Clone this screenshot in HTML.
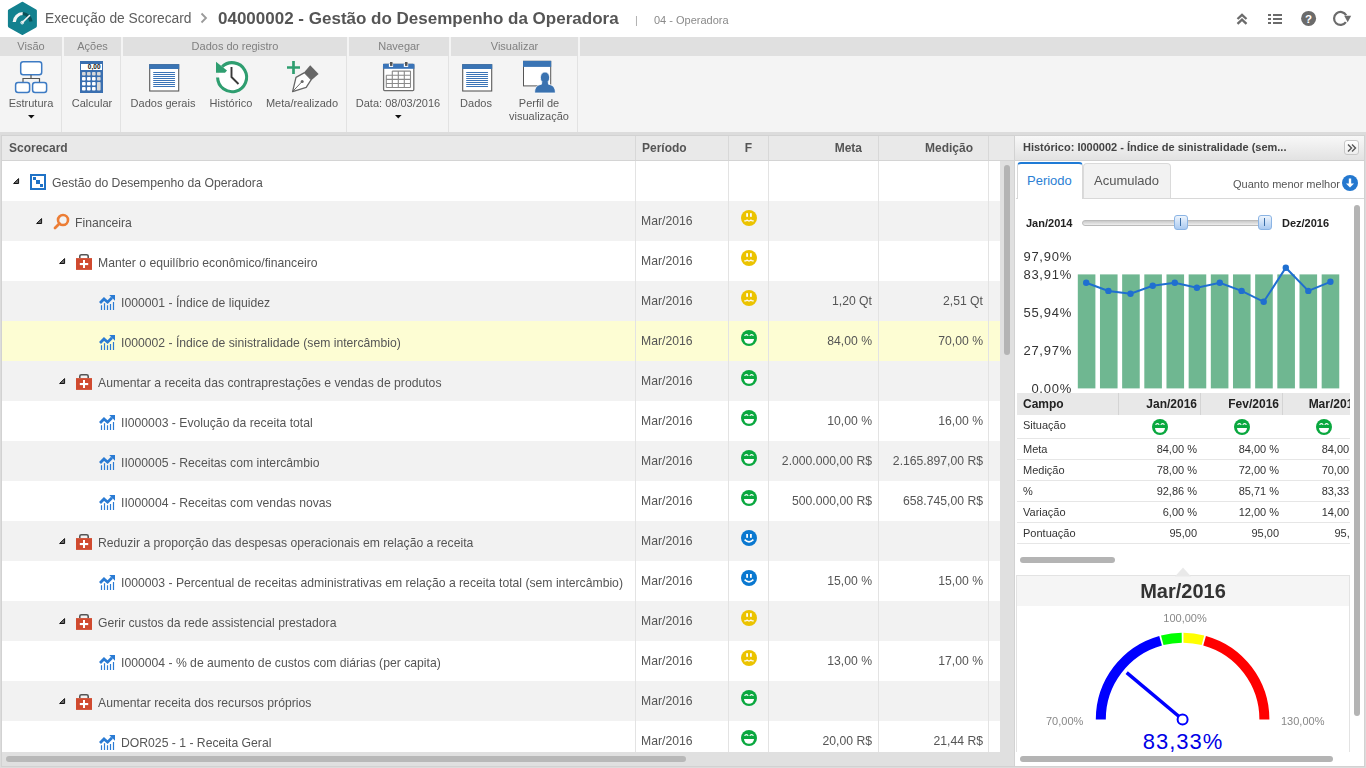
<!DOCTYPE html><html><head><meta charset="utf-8"><style>
*{box-sizing:border-box;margin:0;padding:0}
html,body{width:1366px;height:768px;overflow:hidden;background:#fff;font-family:"Liberation Sans", sans-serif;}
.a{position:absolute}
.t{position:absolute;white-space:nowrap;filter:grayscale(1)}
.c{filter:none}
</style></head><body><svg class="a" style="left:6px;top:0px" width="34" height="37" viewBox="0 0 34 37">
<polygon points="16.4,3.3 29.4,10.7 29.4,26.1 16.4,33.5 3.4,26.1 3.4,10.7" fill="#13818f" stroke="#13818f" stroke-width="3" stroke-linejoin="round"/>
<path d="M8.2,22 A9,9 0 0 1 16.8,13.5" fill="none" stroke="#f4f4f4" stroke-width="3.2"/>
<path d="M16.8,13.5 A9,9 0 0 1 25,21.5" fill="none" stroke="#0b5058" stroke-width="3.2"/>
<path d="M16.2,22.6 L23.5,15.5" stroke="#f4f4f4" stroke-width="1.6" stroke-linecap="round"/>
<circle cx="16.2" cy="22.6" r="1.4" fill="none" stroke="#f4f4f4" stroke-width="1"/>
</svg>
<div class="t" style="left:45px;top:10px;font-size:13.8px;color:#5e5e5e;line-height:18px">Execução de Scorecard</div>
<svg class="a" style="left:199px;top:12px" width="10" height="12"><path d="M2.5,1.5 L7,6 L2.5,10.5" fill="none" stroke="#9a9a9a" stroke-width="1.8"/></svg>
<div class="t" style="left:218px;top:9px;font-size:17px;font-weight:bold;color:#555;line-height:20px">04000002 - Gestão do Desempenho da Operadora</div>
<div class="t" style="left:635px;top:13px;font-size:11px;color:#aaa;line-height:14px">|</div>
<div class="t" style="left:654px;top:13px;font-size:11px;color:#8a8a8a;line-height:14px">04 - Operadora</div>
<svg class="a" style="left:1232px;top:8px" width="124" height="22" viewBox="0 0 124 22">
<g fill="none" stroke="#6b6b6b" stroke-width="2.3"><path d="M5.5,11 L10,6.8 L14.5,11"/><path d="M5.5,15.8 L10,11.6 L14.5,15.8"/></g>
<g fill="#6b6b6b"><rect x="36" y="6" width="3" height="2"/><rect x="36" y="10" width="3" height="2"/><rect x="36" y="14" width="3" height="2"/>
<rect x="41" y="6" width="9" height="2"/><rect x="41" y="10" width="9" height="2"/><rect x="41" y="14" width="9" height="2"/></g>
<circle cx="76.6" cy="10.4" r="7.5" fill="#6b6b6b"/>
<text x="76.6" y="14.6" text-anchor="middle" font-family="Liberation Sans" font-weight="bold" font-size="11.5" fill="#fff">?</text>
<path d="M114.2,7.2 A6.5,6.5 0 1 0 113.9,14.2" fill="none" stroke="#6b6b6b" stroke-width="2.2"/>
<path d="M112.2,7.8 L119.2,7.8 L115.7,14.2 Z" fill="#6b6b6b"/>
</svg>
<div class="a" style="left:0;top:37px;width:1366px;height:95px;background:#f4f4f4"></div>
<div class="t" style="left:0px;top:37px;width:62px;height:19px;background:#e0e0e0;color:#808080;font-size:11px;line-height:19px;text-align:center">Visão</div>
<div class="t" style="left:64px;top:37px;width:57px;height:19px;background:#e0e0e0;color:#808080;font-size:11px;line-height:19px;text-align:center">Ações</div>
<div class="t" style="left:123px;top:37px;width:224px;height:19px;background:#e0e0e0;color:#808080;font-size:11px;line-height:19px;text-align:center">Dados do registro</div>
<div class="t" style="left:349px;top:37px;width:100px;height:19px;background:#e0e0e0;color:#808080;font-size:11px;line-height:19px;text-align:center">Navegar</div>
<div class="t" style="left:451px;top:37px;width:127px;height:19px;background:#e0e0e0;color:#808080;font-size:11px;line-height:19px;text-align:center">Visualizar</div>
<div class="t" style="left:580px;top:37px;width:786px;height:19px;background:#e0e0e0;color:#808080;font-size:11px;line-height:19px;text-align:center"></div>
<div class="a" style="left:61px;top:56px;width:1px;height:76px;background:#e2e2e2"></div>
<div class="a" style="left:120px;top:56px;width:1px;height:76px;background:#e2e2e2"></div>
<div class="a" style="left:346px;top:56px;width:1px;height:76px;background:#e2e2e2"></div>
<div class="a" style="left:448px;top:56px;width:1px;height:76px;background:#e2e2e2"></div>
<div class="a" style="left:577px;top:56px;width:1px;height:76px;background:#e2e2e2"></div>
<svg class="a" style="left:13px;top:60px" width="36" height="34" viewBox="0 0 36 34">
<rect x="7.7" y="1.7" width="21" height="13" rx="2.5" fill="#fff" stroke="#3d7bc4" stroke-width="1.5"/>
<path d="M18,15 V18.5 M10,22 V18.5 H26.5 V22" fill="none" stroke="#555" stroke-width="1.2"/>
<rect x="2.6" y="22.5" width="14" height="10" rx="2.5" fill="#fff" stroke="#3d7bc4" stroke-width="1.5"/>
<rect x="19.6" y="22.5" width="14" height="10" rx="2.5" fill="#fff" stroke="#3d7bc4" stroke-width="1.5"/>
</svg>
<div class="t" style="left:-29px;top:97px;width:120px;text-align:center;font-size:11px;line-height:13px;color:#5a5a5a">Estrutura</div>
<svg class="a" style="left:27.5px;top:115px" width="8" height="5"><path d="M0,0 H6.6 L3.3,3.4 Z" fill="#111"/></svg>
<svg class="a" style="left:80px;top:61px" width="23" height="32" viewBox="0 0 23 32"><rect x="0" y="0" width="23" height="32" fill="#3a6fb0"/><rect x="1" y="3" width="21" height="6" fill="#fff"/><text x="20.5" y="8.3" text-anchor="end" font-family="Liberation Sans" font-weight="bold" font-size="6.5" fill="#111">0,00</text><rect x="2" y="11" width="3.6" height="3.6" rx="0.8" fill="#d8d8d8"/><rect x="7" y="11" width="3.6" height="3.6" rx="0.8" fill="#d8d8d8"/><rect x="12" y="11" width="3.6" height="3.6" rx="0.8" fill="#d8d8d8"/><rect x="17" y="11" width="3.6" height="3.6" rx="0.8" fill="#d8d8d8"/><rect x="2" y="16" width="3.6" height="3.6" rx="0.8" fill="#fff"/><rect x="7" y="16" width="3.6" height="3.6" rx="0.8" fill="#fff"/><rect x="12" y="16" width="3.6" height="3.6" rx="0.8" fill="#fff"/><rect x="17" y="16" width="3.6" height="3.6" rx="0.8" fill="#d8d8d8"/><rect x="2" y="21" width="3.6" height="3.6" rx="0.8" fill="#fff"/><rect x="7" y="21" width="3.6" height="3.6" rx="0.8" fill="#fff"/><rect x="12" y="21" width="3.6" height="3.6" rx="0.8" fill="#fff"/><rect x="2" y="26" width="3.6" height="3.6" rx="0.8" fill="#fff"/><rect x="7" y="26" width="3.6" height="3.6" rx="0.8" fill="#fff"/><rect x="12" y="26" width="3.6" height="3.6" rx="0.8" fill="#fff"/><rect x="17" y="21" width="3.6" height="8.6" rx="0.8" fill="#d8d8d8"/></svg>
<div class="t" style="left:32px;top:97px;width:120px;text-align:center;font-size:11px;line-height:13px;color:#5a5a5a">Calcular</div>
<svg class="a" style="left:148px;top:63px" width="32" height="29" viewBox="0 0 32 29">
<rect x="1.7" y="1.7" width="29" height="26.3" fill="#fff" stroke="#5a5a5a" stroke-width="1.1"/>
<rect x="1.2" y="1.2" width="30" height="4.8" fill="#3a74b4"/>
<g stroke="#3a74b8" stroke-width="1.05" stroke-linecap="round"><path d="M5.6,9.5H26.6M5.6,11.5H26.6M5.6,13.5H26.6M5.6,15.5H26.6M5.6,17.5H26.6M5.6,19.5H26.6M5.6,21.5H26.6M5.6,23.5H26.6"/></g>
</svg>
<div class="t" style="left:103px;top:97px;width:120px;text-align:center;font-size:11px;line-height:13px;color:#5a5a5a">Dados gerais</div>
<svg class="a" style="left:214px;top:59px" width="36" height="36" viewBox="0 0 36 36">
<circle cx="18" cy="17.9" r="13.5" fill="#fff"/>
<path d="M3.6,18.5 A14.5,14.5 0 1 0 8.2,7.6" fill="none" stroke="#2f9e70" stroke-width="3.1"/>
<path d="M2,2.8 L2,13.8 L11,13.8 L13,11.4 Z" fill="#2f9e70"/>
<path d="M17.5,8 V18 L24.5,25" fill="none" stroke="#3a3a3a" stroke-width="1.9"/>
</svg>
<div class="t" style="left:171px;top:97px;width:120px;text-align:center;font-size:11px;line-height:13px;color:#5a5a5a">Histórico</div>
<svg class="a" style="left:285px;top:59px" width="36" height="36" viewBox="0 0 36 36">
<path d="M8.5,2 V15 M2,8.5 H15" stroke="#2f9e70" stroke-width="2.7"/>
<path d="M25.2,6.2 L33.6,15 L26.4,21.3 L19.2,13.2 Z" fill="#666"/>
<path d="M19.5,13.6 L11,18.4 L7.6,32.6 L21.2,28.4 L26.2,20.6 Z" fill="#fff" stroke="#666" stroke-width="1.3" stroke-linejoin="round"/>
<path d="M7.6,32.6 L16.8,22.8" stroke="#666" stroke-width="1"/>
<circle cx="17.2" cy="22.6" r="1.5" fill="#666"/>
</svg>
<div class="t" style="left:242px;top:97px;width:120px;text-align:center;font-size:11px;line-height:13px;color:#5a5a5a">Meta/realizado</div>
<svg class="a" style="left:382px;top:61px" width="33" height="31" viewBox="0 0 33 31">
<rect x="1.6" y="3.4" width="30.2" height="26.2" rx="1" fill="#fff" stroke="#6e6e6e" stroke-width="1.3"/>
<rect x="1" y="2.8" width="31.4" height="5" fill="#3a74b8"/>
<rect x="6.9" y="2.8" width="4.2" height="3.1" fill="#fff"/><rect x="21.8" y="2.8" width="4.4" height="3.1" fill="#fff"/>
<rect x="8" y="1" width="2.5" height="3.9" fill="#555"/><rect x="23" y="1" width="2.5" height="3.9" fill="#555"/>
<g stroke="#8a8a8a" stroke-width="1.1" fill="none">
<path d="M10.3,10.1 H28.5 M4.3,14.3 H28.5 M4.3,18.4 H28.5 M4.3,22.5 H28.5 M4.3,26.5 H28.5 M4.3,14.3 V26.5 M10.3,10.1 V26.5 M16.3,10.1 V26.5 M22.3,10.1 V26.5 M28.5,10.1 V26.5"/></g>
</svg>
<div class="t" style="left:338px;top:97px;width:120px;text-align:center;font-size:11px;line-height:13px;color:#5a5a5a">Data: 08/03/2016</div>
<svg class="a" style="left:395px;top:115px" width="8" height="5"><path d="M0,0 H6.6 L3.3,3.4 Z" fill="#111"/></svg>
<svg class="a" style="left:461px;top:63px" width="32" height="29" viewBox="0 0 32 29">
<rect x="1.7" y="1.7" width="29" height="26.3" fill="#fff" stroke="#5a5a5a" stroke-width="1.1"/>
<rect x="1.2" y="1.2" width="30" height="4.8" fill="#3a74b4"/>
<g stroke="#3a74b8" stroke-width="1.05" stroke-linecap="round"><path d="M5.6,9.5H26.6M5.6,11.5H26.6M5.6,13.5H26.6M5.6,15.5H26.6M5.6,17.5H26.6M5.6,19.5H26.6M5.6,21.5H26.6M5.6,23.5H26.6"/></g>
</svg>
<div class="t" style="left:416px;top:97px;width:120px;text-align:center;font-size:11px;line-height:13px;color:#5a5a5a">Dados</div>
<svg class="a" style="left:522px;top:60px" width="36" height="36" viewBox="0 0 36 36">
<rect x="1.5" y="1.3" width="27.2" height="24.6" fill="#fff" stroke="#555" stroke-width="1"/>
<rect x="1" y="0.9" width="28.2" height="6" fill="#3a74b4"/>
<g fill="#3a72b0" stroke="#fff" stroke-width="0.8">
<path d="M12.6,33 C12.6,27 15,25.2 19.5,24.2 L19.8,21.5 C17.5,19.8 17.8,12 23,12 C28.2,12 28.5,19.8 26.2,21.5 L26.5,24.2 C31,25.2 33.4,27 33.4,33 Z"/>
</g>
</svg>
<div class="t" style="left:479px;top:97px;width:120px;text-align:center;font-size:11px;line-height:12.5px;color:#5a5a5a">Perfil de<br>visualização</div>
<div class="a" style="left:0;top:132px;width:1366px;height:636px;background:#dcdcdc"></div>
<div class="a" style="left:1px;top:135px;width:1014px;height:632px;border:1px solid #d2d2d2;background:#fff"></div>
<div class="a" style="left:2px;top:136px;width:1012px;height:25px;background:#e9e9e9;border-bottom:1px solid #d4d4d4"></div>
<div class="a" style="left:635px;top:136px;width:1px;height:24px;background:#d8d8d8"></div>
<div class="a" style="left:728px;top:136px;width:1px;height:24px;background:#d8d8d8"></div>
<div class="a" style="left:768px;top:136px;width:1px;height:24px;background:#d8d8d8"></div>
<div class="a" style="left:878px;top:136px;width:1px;height:24px;background:#d8d8d8"></div>
<div class="a" style="left:988px;top:136px;width:1px;height:24px;background:#d8d8d8"></div>
<div class="t" style="left:9px;top:141px;font-size:12px;font-weight:bold;color:#555;line-height:15px">Scorecard</div>
<div class="t" style="left:642px;top:141px;font-size:12px;font-weight:bold;color:#555;line-height:15px">Período</div>
<div class="t" style="left:729px;width:39px;text-align:center;top:141px;font-size:12px;font-weight:bold;color:#555;line-height:15px">F</div>
<div class="t" style="left:769px;width:93px;text-align:right;top:141px;font-size:12px;font-weight:bold;color:#555;line-height:15px">Meta</div>
<div class="t" style="left:879px;width:94px;text-align:right;top:141px;font-size:12px;font-weight:bold;color:#555;line-height:15px">Medição</div>
<div class="a" style="left:2px;top:161px;width:998px;height:591px;overflow:hidden"><div class="a" style="left:0;top:0px;width:998px;height:40px;background:#fff"></div><svg class="a" style="left:11px;top:17px" width="7" height="7"><path d="M5.6,0.6 V5.5 H0.6 Z" fill="#6a6a6a" stroke="#141414" stroke-width="1" stroke-linejoin="round"/></svg><svg class="a" style="left:28px;top:13px" width="16" height="16" viewBox="0 0 16 16">
<rect x="1" y="1" width="14" height="14" fill="#fff" stroke="#1f72c6" stroke-width="2"/>
<rect x="3" y="3" width="3" height="3" fill="#1f72c6"/><rect x="6" y="6" width="4" height="4" fill="#1f72c6"/><rect x="10" y="10" width="3" height="3" fill="#1f72c6"/>
</svg><div class="t" style="left:50px;top:15px;font-size:12.2px;line-height:15px;color:#555">Gestão do Desempenho da Operadora</div><div class="a" style="left:0;top:40px;width:998px;height:40px;background:#f2f2f2"></div><svg class="a" style="left:34px;top:57px" width="7" height="7"><path d="M5.6,0.6 V5.5 H0.6 Z" fill="#6a6a6a" stroke="#141414" stroke-width="1" stroke-linejoin="round"/></svg><svg class="a" style="left:51px;top:52px" width="17" height="17" viewBox="0 0 17 17">
<circle cx="10" cy="7" r="5" fill="none" stroke="#ec7d35" stroke-width="2.6"/>
<path d="M6.5,10.5 L2,15" stroke="#ec7d35" stroke-width="2.8" stroke-linecap="round"/>
</svg><div class="t" style="left:73px;top:55px;font-size:12.2px;line-height:15px;color:#555">Financeira</div><div class="t" style="left:639px;top:53px;font-size:12.2px;line-height:15px;color:#555">Mar/2016</div><svg class="a" style="left:739px;top:49px" width="16" height="16" viewBox="0 0 16 16"><circle cx="8" cy="8" r="8" fill="#ebc300"/><rect x="5.2" y="3.2" width="1.8" height="3.6" fill="#fff"/><rect x="9" y="3.2" width="1.8" height="3.6" fill="#fff"/><path d="M3.3,11.6 V10.3 H5.4 V9.6 H6.8 V10.3 H9.2 V9.6 H10.6 V10.3 H12.7 V11.6 H10.6 V10.9 H9.2 V11.6 H6.8 V10.9 H5.4 V11.6 Z" fill="#fff"/></svg><div class="a" style="left:0;top:80px;width:998px;height:40px;background:#fff"></div><svg class="a" style="left:57px;top:97px" width="7" height="7"><path d="M5.6,0.6 V5.5 H0.6 Z" fill="#6a6a6a" stroke="#141414" stroke-width="1" stroke-linejoin="round"/></svg><svg class="a" style="left:74px;top:92px" width="16" height="17" viewBox="0 0 16 17">
<path d="M3.8,5 V3.3 Q3.8,1.7 5.4,1.7 H10.6 Q12.2,1.7 12.2,3.3 V5" fill="none" stroke="#555" stroke-width="1.6"/>
<rect x="0" y="5.1" width="16" height="11.8" fill="#d04a2f"/>
<rect x="3.8" y="10" width="8.4" height="2.1" fill="#fff"/><rect x="7" y="7" width="2" height="8" fill="#fff"/>
</svg><div class="t" style="left:96px;top:95px;font-size:12.2px;line-height:15px;color:#555">Manter o equilíbrio econômico/financeiro</div><div class="t" style="left:639px;top:93px;font-size:12.2px;line-height:15px;color:#555">Mar/2016</div><svg class="a" style="left:739px;top:89px" width="16" height="16" viewBox="0 0 16 16"><circle cx="8" cy="8" r="8" fill="#ebc300"/><rect x="5.2" y="3.2" width="1.8" height="3.6" fill="#fff"/><rect x="9" y="3.2" width="1.8" height="3.6" fill="#fff"/><path d="M3.3,11.6 V10.3 H5.4 V9.6 H6.8 V10.3 H9.2 V9.6 H10.6 V10.3 H12.7 V11.6 H10.6 V10.9 H9.2 V11.6 H6.8 V10.9 H5.4 V11.6 Z" fill="#fff"/></svg><div class="a" style="left:0;top:120px;width:998px;height:40px;background:#f2f2f2"></div><svg class="a" style="left:97px;top:133px" width="17" height="17" viewBox="0 0 17 17">
<path d="M1,9 L5,5 L8.6,8.2 L13,3.8" fill="none" stroke="#2a7bd4" stroke-width="2.8" stroke-linejoin="miter"/>
<path d="M10.2,1.1 H16 V6.8 Z" fill="#2a7bd4"/>
<g stroke="#2a7bd4" stroke-width="1.2"><path d="M2.5,11.2V16 M5.5,9.2V16 M8.5,11.2V16 M11.5,10.1V16 M14.5,8V16"/></g>
</svg><div class="t" style="left:119px;top:135px;font-size:12.2px;line-height:15px;color:#555">I000001 - Índice de liquidez</div><div class="t" style="left:639px;top:133px;font-size:12.2px;line-height:15px;color:#555">Mar/2016</div><svg class="a" style="left:739px;top:129px" width="16" height="16" viewBox="0 0 16 16"><circle cx="8" cy="8" r="8" fill="#ebc300"/><rect x="5.2" y="3.2" width="1.8" height="3.6" fill="#fff"/><rect x="9" y="3.2" width="1.8" height="3.6" fill="#fff"/><path d="M3.3,11.6 V10.3 H5.4 V9.6 H6.8 V10.3 H9.2 V9.6 H10.6 V10.3 H12.7 V11.6 H10.6 V10.9 H9.2 V11.6 H6.8 V10.9 H5.4 V11.6 Z" fill="#fff"/></svg><div class="t" style="left:767px;width:103px;text-align:right;top:133px;font-size:12.2px;line-height:15px;color:#555">1,20 Qt</div><div class="t" style="left:877px;width:104px;text-align:right;top:133px;font-size:12.2px;line-height:15px;color:#555">2,51 Qt</div><div class="a" style="left:0;top:160px;width:998px;height:40px;background:#fdfdd3"></div><svg class="a" style="left:97px;top:173px" width="17" height="17" viewBox="0 0 17 17">
<path d="M1,9 L5,5 L8.6,8.2 L13,3.8" fill="none" stroke="#2a7bd4" stroke-width="2.8" stroke-linejoin="miter"/>
<path d="M10.2,1.1 H16 V6.8 Z" fill="#2a7bd4"/>
<g stroke="#2a7bd4" stroke-width="1.2"><path d="M2.5,11.2V16 M5.5,9.2V16 M8.5,11.2V16 M11.5,10.1V16 M14.5,8V16"/></g>
</svg><div class="t" style="left:119px;top:175px;font-size:12.2px;line-height:15px;color:#555">I000002 - Índice de sinistralidade (sem intercâmbio)</div><div class="t" style="left:639px;top:173px;font-size:12.2px;line-height:15px;color:#555">Mar/2016</div><svg class="a" style="left:739px;top:169px" width="16" height="16" viewBox="0 0 16 16"><circle cx="8" cy="8" r="8" fill="#0aa83f"/><path d="M3.6,5.9 A1.9,1.9 0 0 1 7.2,5.9 M8.8,5.9 A1.9,1.9 0 0 1 12.4,5.9" fill="none" stroke="#fff" stroke-width="1.1"/><path d="M3,9 H13 A5,4.8 0 0 1 3,9 Z" fill="#fff"/></svg><div class="t" style="left:767px;width:103px;text-align:right;top:173px;font-size:12.2px;line-height:15px;color:#555">84,00 %</div><div class="t" style="left:877px;width:104px;text-align:right;top:173px;font-size:12.2px;line-height:15px;color:#555">70,00 %</div><div class="a" style="left:0;top:200px;width:998px;height:40px;background:#f2f2f2"></div><svg class="a" style="left:57px;top:217px" width="7" height="7"><path d="M5.6,0.6 V5.5 H0.6 Z" fill="#6a6a6a" stroke="#141414" stroke-width="1" stroke-linejoin="round"/></svg><svg class="a" style="left:74px;top:212px" width="16" height="17" viewBox="0 0 16 17">
<path d="M3.8,5 V3.3 Q3.8,1.7 5.4,1.7 H10.6 Q12.2,1.7 12.2,3.3 V5" fill="none" stroke="#555" stroke-width="1.6"/>
<rect x="0" y="5.1" width="16" height="11.8" fill="#d04a2f"/>
<rect x="3.8" y="10" width="8.4" height="2.1" fill="#fff"/><rect x="7" y="7" width="2" height="8" fill="#fff"/>
</svg><div class="t" style="left:96px;top:215px;font-size:12.2px;line-height:15px;color:#555">Aumentar a receita das contraprestações e vendas de produtos</div><div class="t" style="left:639px;top:213px;font-size:12.2px;line-height:15px;color:#555">Mar/2016</div><svg class="a" style="left:739px;top:209px" width="16" height="16" viewBox="0 0 16 16"><circle cx="8" cy="8" r="8" fill="#0aa83f"/><path d="M3.6,5.9 A1.9,1.9 0 0 1 7.2,5.9 M8.8,5.9 A1.9,1.9 0 0 1 12.4,5.9" fill="none" stroke="#fff" stroke-width="1.1"/><path d="M3,9 H13 A5,4.8 0 0 1 3,9 Z" fill="#fff"/></svg><div class="a" style="left:0;top:240px;width:998px;height:40px;background:#fff"></div><svg class="a" style="left:97px;top:253px" width="17" height="17" viewBox="0 0 17 17">
<path d="M1,9 L5,5 L8.6,8.2 L13,3.8" fill="none" stroke="#2a7bd4" stroke-width="2.8" stroke-linejoin="miter"/>
<path d="M10.2,1.1 H16 V6.8 Z" fill="#2a7bd4"/>
<g stroke="#2a7bd4" stroke-width="1.2"><path d="M2.5,11.2V16 M5.5,9.2V16 M8.5,11.2V16 M11.5,10.1V16 M14.5,8V16"/></g>
</svg><div class="t" style="left:119px;top:255px;font-size:12.2px;line-height:15px;color:#555">II000003 - Evolução da receita total</div><div class="t" style="left:639px;top:253px;font-size:12.2px;line-height:15px;color:#555">Mar/2016</div><svg class="a" style="left:739px;top:249px" width="16" height="16" viewBox="0 0 16 16"><circle cx="8" cy="8" r="8" fill="#0aa83f"/><path d="M3.6,5.9 A1.9,1.9 0 0 1 7.2,5.9 M8.8,5.9 A1.9,1.9 0 0 1 12.4,5.9" fill="none" stroke="#fff" stroke-width="1.1"/><path d="M3,9 H13 A5,4.8 0 0 1 3,9 Z" fill="#fff"/></svg><div class="t" style="left:767px;width:103px;text-align:right;top:253px;font-size:12.2px;line-height:15px;color:#555">10,00 %</div><div class="t" style="left:877px;width:104px;text-align:right;top:253px;font-size:12.2px;line-height:15px;color:#555">16,00 %</div><div class="a" style="left:0;top:280px;width:998px;height:40px;background:#f2f2f2"></div><svg class="a" style="left:97px;top:293px" width="17" height="17" viewBox="0 0 17 17">
<path d="M1,9 L5,5 L8.6,8.2 L13,3.8" fill="none" stroke="#2a7bd4" stroke-width="2.8" stroke-linejoin="miter"/>
<path d="M10.2,1.1 H16 V6.8 Z" fill="#2a7bd4"/>
<g stroke="#2a7bd4" stroke-width="1.2"><path d="M2.5,11.2V16 M5.5,9.2V16 M8.5,11.2V16 M11.5,10.1V16 M14.5,8V16"/></g>
</svg><div class="t" style="left:119px;top:295px;font-size:12.2px;line-height:15px;color:#555">II000005 - Receitas com intercâmbio</div><div class="t" style="left:639px;top:293px;font-size:12.2px;line-height:15px;color:#555">Mar/2016</div><svg class="a" style="left:739px;top:289px" width="16" height="16" viewBox="0 0 16 16"><circle cx="8" cy="8" r="8" fill="#0aa83f"/><path d="M3.6,5.9 A1.9,1.9 0 0 1 7.2,5.9 M8.8,5.9 A1.9,1.9 0 0 1 12.4,5.9" fill="none" stroke="#fff" stroke-width="1.1"/><path d="M3,9 H13 A5,4.8 0 0 1 3,9 Z" fill="#fff"/></svg><div class="t" style="left:767px;width:103px;text-align:right;top:293px;font-size:12.2px;line-height:15px;color:#555">2.000.000,00 R$</div><div class="t" style="left:877px;width:104px;text-align:right;top:293px;font-size:12.2px;line-height:15px;color:#555">2.165.897,00 R$</div><div class="a" style="left:0;top:320px;width:998px;height:40px;background:#fff"></div><svg class="a" style="left:97px;top:333px" width="17" height="17" viewBox="0 0 17 17">
<path d="M1,9 L5,5 L8.6,8.2 L13,3.8" fill="none" stroke="#2a7bd4" stroke-width="2.8" stroke-linejoin="miter"/>
<path d="M10.2,1.1 H16 V6.8 Z" fill="#2a7bd4"/>
<g stroke="#2a7bd4" stroke-width="1.2"><path d="M2.5,11.2V16 M5.5,9.2V16 M8.5,11.2V16 M11.5,10.1V16 M14.5,8V16"/></g>
</svg><div class="t" style="left:119px;top:335px;font-size:12.2px;line-height:15px;color:#555">II000004 - Receitas com vendas novas</div><div class="t" style="left:639px;top:333px;font-size:12.2px;line-height:15px;color:#555">Mar/2016</div><svg class="a" style="left:739px;top:329px" width="16" height="16" viewBox="0 0 16 16"><circle cx="8" cy="8" r="8" fill="#0aa83f"/><path d="M3.6,5.9 A1.9,1.9 0 0 1 7.2,5.9 M8.8,5.9 A1.9,1.9 0 0 1 12.4,5.9" fill="none" stroke="#fff" stroke-width="1.1"/><path d="M3,9 H13 A5,4.8 0 0 1 3,9 Z" fill="#fff"/></svg><div class="t" style="left:767px;width:103px;text-align:right;top:333px;font-size:12.2px;line-height:15px;color:#555">500.000,00 R$</div><div class="t" style="left:877px;width:104px;text-align:right;top:333px;font-size:12.2px;line-height:15px;color:#555">658.745,00 R$</div><div class="a" style="left:0;top:360px;width:998px;height:40px;background:#f2f2f2"></div><svg class="a" style="left:57px;top:377px" width="7" height="7"><path d="M5.6,0.6 V5.5 H0.6 Z" fill="#6a6a6a" stroke="#141414" stroke-width="1" stroke-linejoin="round"/></svg><svg class="a" style="left:74px;top:372px" width="16" height="17" viewBox="0 0 16 17">
<path d="M3.8,5 V3.3 Q3.8,1.7 5.4,1.7 H10.6 Q12.2,1.7 12.2,3.3 V5" fill="none" stroke="#555" stroke-width="1.6"/>
<rect x="0" y="5.1" width="16" height="11.8" fill="#d04a2f"/>
<rect x="3.8" y="10" width="8.4" height="2.1" fill="#fff"/><rect x="7" y="7" width="2" height="8" fill="#fff"/>
</svg><div class="t" style="left:96px;top:375px;font-size:12.2px;line-height:15px;color:#555">Reduzir a proporção das despesas operacionais em relação a receita</div><div class="t" style="left:639px;top:373px;font-size:12.2px;line-height:15px;color:#555">Mar/2016</div><svg class="a" style="left:739px;top:369px" width="16" height="16" viewBox="0 0 16 16"><circle cx="8" cy="8" r="8" fill="#0a78d0"/><rect x="5.2" y="4" width="1.8" height="3.8" fill="#fff"/><rect x="9" y="4" width="1.8" height="3.8" fill="#fff"/><path d="M3.6,9.6 Q8,14 12.4,9.6" fill="none" stroke="#fff" stroke-width="1.6"/></svg><div class="a" style="left:0;top:400px;width:998px;height:40px;background:#fff"></div><svg class="a" style="left:97px;top:413px" width="17" height="17" viewBox="0 0 17 17">
<path d="M1,9 L5,5 L8.6,8.2 L13,3.8" fill="none" stroke="#2a7bd4" stroke-width="2.8" stroke-linejoin="miter"/>
<path d="M10.2,1.1 H16 V6.8 Z" fill="#2a7bd4"/>
<g stroke="#2a7bd4" stroke-width="1.2"><path d="M2.5,11.2V16 M5.5,9.2V16 M8.5,11.2V16 M11.5,10.1V16 M14.5,8V16"/></g>
</svg><div class="t" style="left:119px;top:415px;font-size:12.2px;line-height:15px;color:#555">I000003 - Percentual de receitas administrativas em relação a receita total (sem intercâmbio)</div><div class="t" style="left:639px;top:413px;font-size:12.2px;line-height:15px;color:#555">Mar/2016</div><svg class="a" style="left:739px;top:409px" width="16" height="16" viewBox="0 0 16 16"><circle cx="8" cy="8" r="8" fill="#0a78d0"/><rect x="5.2" y="4" width="1.8" height="3.8" fill="#fff"/><rect x="9" y="4" width="1.8" height="3.8" fill="#fff"/><path d="M3.6,9.6 Q8,14 12.4,9.6" fill="none" stroke="#fff" stroke-width="1.6"/></svg><div class="t" style="left:767px;width:103px;text-align:right;top:413px;font-size:12.2px;line-height:15px;color:#555">15,00 %</div><div class="t" style="left:877px;width:104px;text-align:right;top:413px;font-size:12.2px;line-height:15px;color:#555">15,00 %</div><div class="a" style="left:0;top:440px;width:998px;height:40px;background:#f2f2f2"></div><svg class="a" style="left:57px;top:457px" width="7" height="7"><path d="M5.6,0.6 V5.5 H0.6 Z" fill="#6a6a6a" stroke="#141414" stroke-width="1" stroke-linejoin="round"/></svg><svg class="a" style="left:74px;top:452px" width="16" height="17" viewBox="0 0 16 17">
<path d="M3.8,5 V3.3 Q3.8,1.7 5.4,1.7 H10.6 Q12.2,1.7 12.2,3.3 V5" fill="none" stroke="#555" stroke-width="1.6"/>
<rect x="0" y="5.1" width="16" height="11.8" fill="#d04a2f"/>
<rect x="3.8" y="10" width="8.4" height="2.1" fill="#fff"/><rect x="7" y="7" width="2" height="8" fill="#fff"/>
</svg><div class="t" style="left:96px;top:455px;font-size:12.2px;line-height:15px;color:#555">Gerir custos da rede assistencial prestadora</div><div class="t" style="left:639px;top:453px;font-size:12.2px;line-height:15px;color:#555">Mar/2016</div><svg class="a" style="left:739px;top:449px" width="16" height="16" viewBox="0 0 16 16"><circle cx="8" cy="8" r="8" fill="#ebc300"/><rect x="5.2" y="3.2" width="1.8" height="3.6" fill="#fff"/><rect x="9" y="3.2" width="1.8" height="3.6" fill="#fff"/><path d="M3.3,11.6 V10.3 H5.4 V9.6 H6.8 V10.3 H9.2 V9.6 H10.6 V10.3 H12.7 V11.6 H10.6 V10.9 H9.2 V11.6 H6.8 V10.9 H5.4 V11.6 Z" fill="#fff"/></svg><div class="a" style="left:0;top:480px;width:998px;height:40px;background:#fff"></div><svg class="a" style="left:97px;top:493px" width="17" height="17" viewBox="0 0 17 17">
<path d="M1,9 L5,5 L8.6,8.2 L13,3.8" fill="none" stroke="#2a7bd4" stroke-width="2.8" stroke-linejoin="miter"/>
<path d="M10.2,1.1 H16 V6.8 Z" fill="#2a7bd4"/>
<g stroke="#2a7bd4" stroke-width="1.2"><path d="M2.5,11.2V16 M5.5,9.2V16 M8.5,11.2V16 M11.5,10.1V16 M14.5,8V16"/></g>
</svg><div class="t" style="left:119px;top:495px;font-size:12.2px;line-height:15px;color:#555">I000004 - % de aumento de custos com diárias (per capita)</div><div class="t" style="left:639px;top:493px;font-size:12.2px;line-height:15px;color:#555">Mar/2016</div><svg class="a" style="left:739px;top:489px" width="16" height="16" viewBox="0 0 16 16"><circle cx="8" cy="8" r="8" fill="#ebc300"/><rect x="5.2" y="3.2" width="1.8" height="3.6" fill="#fff"/><rect x="9" y="3.2" width="1.8" height="3.6" fill="#fff"/><path d="M3.3,11.6 V10.3 H5.4 V9.6 H6.8 V10.3 H9.2 V9.6 H10.6 V10.3 H12.7 V11.6 H10.6 V10.9 H9.2 V11.6 H6.8 V10.9 H5.4 V11.6 Z" fill="#fff"/></svg><div class="t" style="left:767px;width:103px;text-align:right;top:493px;font-size:12.2px;line-height:15px;color:#555">13,00 %</div><div class="t" style="left:877px;width:104px;text-align:right;top:493px;font-size:12.2px;line-height:15px;color:#555">17,00 %</div><div class="a" style="left:0;top:520px;width:998px;height:40px;background:#f2f2f2"></div><svg class="a" style="left:57px;top:537px" width="7" height="7"><path d="M5.6,0.6 V5.5 H0.6 Z" fill="#6a6a6a" stroke="#141414" stroke-width="1" stroke-linejoin="round"/></svg><svg class="a" style="left:74px;top:532px" width="16" height="17" viewBox="0 0 16 17">
<path d="M3.8,5 V3.3 Q3.8,1.7 5.4,1.7 H10.6 Q12.2,1.7 12.2,3.3 V5" fill="none" stroke="#555" stroke-width="1.6"/>
<rect x="0" y="5.1" width="16" height="11.8" fill="#d04a2f"/>
<rect x="3.8" y="10" width="8.4" height="2.1" fill="#fff"/><rect x="7" y="7" width="2" height="8" fill="#fff"/>
</svg><div class="t" style="left:96px;top:535px;font-size:12.2px;line-height:15px;color:#555">Aumentar receita dos recursos próprios</div><div class="t" style="left:639px;top:533px;font-size:12.2px;line-height:15px;color:#555">Mar/2016</div><svg class="a" style="left:739px;top:529px" width="16" height="16" viewBox="0 0 16 16"><circle cx="8" cy="8" r="8" fill="#0aa83f"/><path d="M3.6,5.9 A1.9,1.9 0 0 1 7.2,5.9 M8.8,5.9 A1.9,1.9 0 0 1 12.4,5.9" fill="none" stroke="#fff" stroke-width="1.1"/><path d="M3,9 H13 A5,4.8 0 0 1 3,9 Z" fill="#fff"/></svg><div class="a" style="left:0;top:560px;width:998px;height:40px;background:#fff"></div><svg class="a" style="left:97px;top:573px" width="17" height="17" viewBox="0 0 17 17">
<path d="M1,9 L5,5 L8.6,8.2 L13,3.8" fill="none" stroke="#2a7bd4" stroke-width="2.8" stroke-linejoin="miter"/>
<path d="M10.2,1.1 H16 V6.8 Z" fill="#2a7bd4"/>
<g stroke="#2a7bd4" stroke-width="1.2"><path d="M2.5,11.2V16 M5.5,9.2V16 M8.5,11.2V16 M11.5,10.1V16 M14.5,8V16"/></g>
</svg><div class="t" style="left:119px;top:575px;font-size:12.2px;line-height:15px;color:#555">DOR025 - 1 - Receita Geral</div><div class="t" style="left:639px;top:573px;font-size:12.2px;line-height:15px;color:#555">Mar/2016</div><svg class="a" style="left:739px;top:569px" width="16" height="16" viewBox="0 0 16 16"><circle cx="8" cy="8" r="8" fill="#0aa83f"/><path d="M3.6,5.9 A1.9,1.9 0 0 1 7.2,5.9 M8.8,5.9 A1.9,1.9 0 0 1 12.4,5.9" fill="none" stroke="#fff" stroke-width="1.1"/><path d="M3,9 H13 A5,4.8 0 0 1 3,9 Z" fill="#fff"/></svg><div class="t" style="left:767px;width:103px;text-align:right;top:573px;font-size:12.2px;line-height:15px;color:#555">20,00 R$</div><div class="t" style="left:877px;width:104px;text-align:right;top:573px;font-size:12.2px;line-height:15px;color:#555">21,44 R$</div><div class="a" style="left:633px;top:0;width:1px;height:591px;background:#e3e3e3"></div><div class="a" style="left:726px;top:0;width:1px;height:591px;background:#e3e3e3"></div><div class="a" style="left:766px;top:0;width:1px;height:591px;background:#e3e3e3"></div><div class="a" style="left:876px;top:0;width:1px;height:591px;background:#e3e3e3"></div><div class="a" style="left:986px;top:0;width:1px;height:591px;background:#e3e3e3"></div></div>
<div class="a" style="left:1000px;top:161px;width:14px;height:605px;background:#e0e0e0"></div>
<div class="a" style="left:1004px;top:165px;width:6px;height:190px;background:#b4b4b4;border-radius:3px"></div>
<div class="a" style="left:2px;top:752px;width:998px;height:14px;background:#e0e0e0"></div>
<div class="a" style="left:6px;top:756px;width:680px;height:6px;background:#b8b8b8;border-radius:3px"></div>
<div class="a" style="left:1014px;top:135px;width:351px;height:632px;border:1px solid #d2d2d2;background:#fff"></div><div class="a" style="left:1015px;top:136px;width:349px;height:25px;background:linear-gradient(#f8f8f8,#e2e2e2);border-bottom:1px solid #d0d0d0"></div><div class="t" style="left:1023px;top:140px;font-size:11px;font-weight:bold;color:#444;line-height:14px">Histórico: I000002 - Índice de sinistralidade (sem...</div><div class="a" style="left:1344px;top:140px;width:15px;height:15px;border:1px solid #c8c8c8;border-radius:3px;background:linear-gradient(#fff,#eee)"></div><svg class="a" style="left:1346px;top:143px" width="12" height="10"><path d="M2,1.5 L5.5,5 L2,8.5 M6,1.5 L9.5,5 L6,8.5" fill="none" stroke="#555" stroke-width="1.4"/></svg><div class="a" style="left:1016px;top:198px;width:348px;height:1px;background:#d8d8d8"></div><div class="a" style="left:1017px;top:162px;width:66px;height:37px;background:#fff;border:1px solid #d8d8d8;border-top:2px solid #1f7bd6;border-bottom:none;border-radius:4px 4px 0 0"></div><div class="t c" style="left:1027px;top:173px;font-size:13px;line-height:16px;color:#2b80d4">Periodo</div><div class="a" style="left:1083px;top:163px;width:88px;height:35px;background:#f2f2f2;border:1px solid #dadada;border-bottom:none;border-radius:4px 4px 0 0"></div><div class="t" style="left:1094px;top:173px;font-size:13px;line-height:16px;color:#555">Acumulado</div><div class="t" style="left:1233px;top:177px;font-size:11px;line-height:14px;color:#555">Quanto menor melhor</div><svg class="a" style="left:1342px;top:175px" width="16" height="16" viewBox="0 0 16 16"><circle cx="8" cy="8" r="8" fill="#2478cf"/><path d="M8,3.5 V10" stroke="#fff" stroke-width="2.4"/><path d="M4,8.5 H12 L8,12.5 Z" fill="#fff"/></svg><div class="t" style="left:1026px;top:216px;font-size:11px;font-weight:bold;line-height:14px;color:#222">Jan/2014</div><div class="t" style="left:1282px;top:216px;font-size:11px;font-weight:bold;line-height:14px;color:#222">Dez/2016</div><div class="a" style="left:1082px;top:220px;width:190px;height:6px;border-radius:3px;background:linear-gradient(#c9c9c9,#eee);border:1px solid #bbb"></div><div class="a" style="left:1174px;top:215px;width:14px;height:15px;border-radius:3px;background:linear-gradient(#eef5fd,#a9c9f0);border:1px solid #8bb4e4"></div><div class="a" style="left:1180px;top:218px;width:1px;height:8px;background:#3a6ea8"></div><div class="a" style="left:1258px;top:215px;width:14px;height:15px;border-radius:3px;background:linear-gradient(#eef5fd,#a9c9f0);border:1px solid #8bb4e4"></div><div class="a" style="left:1264px;top:218px;width:1px;height:8px;background:#3a6ea8"></div><div class="a" style="left:1354px;top:205px;width:6px;height:511px;background:#b4b4b4;border-radius:3px"></div><div class="t" style="left:1000px;width:72px;text-align:right;top:249px;font-size:13px;letter-spacing:0.75px;line-height:16px;color:#333">97,90%</div><div class="t" style="left:1000px;width:72px;text-align:right;top:267px;font-size:13px;letter-spacing:0.75px;line-height:16px;color:#333">83,91%</div><div class="t" style="left:1000px;width:72px;text-align:right;top:305px;font-size:13px;letter-spacing:0.75px;line-height:16px;color:#333">55,94%</div><div class="t" style="left:1000px;width:72px;text-align:right;top:343px;font-size:13px;letter-spacing:0.75px;line-height:16px;color:#333">27,97%</div><div class="t" style="left:1000px;width:72px;text-align:right;top:381px;font-size:13px;letter-spacing:0.75px;line-height:16px;color:#333">0,00%</div><svg class="a" style="left:1016px;top:240px" width="340" height="155" viewBox="0 0 340 155"><rect x="61.80" y="34.4" width="17.6" height="114" fill="#6fb791"/><rect x="83.97" y="34.4" width="17.6" height="114" fill="#6fb791"/><rect x="106.14" y="34.4" width="17.6" height="114" fill="#6fb791"/><rect x="128.31" y="34.4" width="17.6" height="114" fill="#6fb791"/><rect x="150.48" y="34.4" width="17.6" height="114" fill="#6fb791"/><rect x="172.65" y="34.4" width="17.6" height="114" fill="#6fb791"/><rect x="194.82" y="34.4" width="17.6" height="114" fill="#6fb791"/><rect x="216.99" y="34.4" width="17.6" height="114" fill="#6fb791"/><rect x="239.16" y="34.4" width="17.6" height="114" fill="#6fb791"/><rect x="261.33" y="34.4" width="17.6" height="114" fill="#6fb791"/><rect x="283.50" y="34.4" width="17.6" height="114" fill="#6fb791"/><rect x="305.67" y="34.4" width="17.6" height="114" fill="#6fb791"/><path d="M70.2,42.8 L92.4,50.9 L114.5,53.7 L136.7,45.7 L158.8,42.8 L180.9,47.8 L203.8,42.8 L225.6,50.9 L247.7,61.8 L269.8,27.7 L292.3,50.9 L314.4,41.8" fill="none" stroke="#1f6fd0" stroke-width="2"/><circle cx="70.2" cy="42.8" r="3.2" fill="#1f6fd0"/><circle cx="92.4" cy="50.9" r="3.2" fill="#1f6fd0"/><circle cx="114.5" cy="53.7" r="3.2" fill="#1f6fd0"/><circle cx="136.7" cy="45.7" r="3.2" fill="#1f6fd0"/><circle cx="158.8" cy="42.8" r="3.2" fill="#1f6fd0"/><circle cx="180.9" cy="47.8" r="3.2" fill="#1f6fd0"/><circle cx="203.8" cy="42.8" r="3.2" fill="#1f6fd0"/><circle cx="225.6" cy="50.9" r="3.2" fill="#1f6fd0"/><circle cx="247.7" cy="61.8" r="3.2" fill="#1f6fd0"/><circle cx="269.8" cy="27.7" r="3.2" fill="#1f6fd0"/><circle cx="292.3" cy="50.9" r="3.2" fill="#1f6fd0"/><circle cx="314.4" cy="41.8" r="3.2" fill="#1f6fd0"/></svg><div class="a" style="left:1017px;top:393px;width:333px;height:22px;background:#e8e8e8"></div><div class="a" style="left:1118px;top:393px;width:1px;height:22px;background:#d4d4d4"></div><div class="a" style="left:1200px;top:393px;width:1px;height:22px;background:#d4d4d4"></div><div class="a" style="left:1282px;top:393px;width:1px;height:22px;background:#d4d4d4"></div><div class="t" style="left:1023px;top:397px;font-size:12px;font-weight:bold;line-height:15px;color:#222">Campo</div><div class="t" style="left:1100px;width:97px;text-align:right;top:397px;font-size:12px;font-weight:bold;line-height:15px;color:#222">Jan/2016</div><div class="t" style="left:1182px;width:97px;text-align:right;top:397px;font-size:12px;font-weight:bold;line-height:15px;color:#222">Fev/2016</div><div class="a" style="left:1282px;top:393px;width:68px;height:22px;overflow:hidden"><div class="t" style="left:0;width:78px;text-align:right;top:4px;font-size:12px;font-weight:bold;line-height:15px;color:#222">Mar/2016</div></div><div class="a" style="left:1017px;top:438px;width:333px;height:1px;background:#e6e6e6"></div><div class="t" style="left:1023px;top:418px;font-size:11px;line-height:14px;color:#333">Situação</div><svg class="a" style="left:1152px;top:419px" width="16" height="16" viewBox="0 0 16 16"><circle cx="8" cy="8" r="8" fill="#0aa83f"/><path d="M3.6,5.9 A1.9,1.9 0 0 1 7.2,5.9 M8.8,5.9 A1.9,1.9 0 0 1 12.4,5.9" fill="none" stroke="#fff" stroke-width="1.1"/><path d="M3,9 H13 A5,4.8 0 0 1 3,9 Z" fill="#fff"/></svg><svg class="a" style="left:1234px;top:419px" width="16" height="16" viewBox="0 0 16 16"><circle cx="8" cy="8" r="8" fill="#0aa83f"/><path d="M3.6,5.9 A1.9,1.9 0 0 1 7.2,5.9 M8.8,5.9 A1.9,1.9 0 0 1 12.4,5.9" fill="none" stroke="#fff" stroke-width="1.1"/><path d="M3,9 H13 A5,4.8 0 0 1 3,9 Z" fill="#fff"/></svg><svg class="a" style="left:1316px;top:419px" width="16" height="16" viewBox="0 0 16 16"><circle cx="8" cy="8" r="8" fill="#0aa83f"/><path d="M3.6,5.9 A1.9,1.9 0 0 1 7.2,5.9 M8.8,5.9 A1.9,1.9 0 0 1 12.4,5.9" fill="none" stroke="#fff" stroke-width="1.1"/><path d="M3,9 H13 A5,4.8 0 0 1 3,9 Z" fill="#fff"/></svg><div class="a" style="left:1017px;top:459px;width:333px;height:1px;background:#e6e6e6"></div><div class="t" style="left:1023px;top:442px;font-size:11px;line-height:14px;color:#333">Meta</div><div class="t" style="left:1100px;width:97px;text-align:right;top:442px;font-size:11px;line-height:14px;color:#333">84,00 %</div><div class="t" style="left:1182px;width:97px;text-align:right;top:442px;font-size:11px;line-height:14px;color:#333">84,00 %</div><div class="a" style="left:1282px;top:438px;width:68px;height:21px;overflow:hidden"><div class="t" style="left:0;width:80px;text-align:right;top:4px;font-size:11px;line-height:14px;color:#333">84,00 %</div></div><div class="a" style="left:1017px;top:480px;width:333px;height:1px;background:#e6e6e6"></div><div class="t" style="left:1023px;top:463px;font-size:11px;line-height:14px;color:#333">Medição</div><div class="t" style="left:1100px;width:97px;text-align:right;top:463px;font-size:11px;line-height:14px;color:#333">78,00 %</div><div class="t" style="left:1182px;width:97px;text-align:right;top:463px;font-size:11px;line-height:14px;color:#333">72,00 %</div><div class="a" style="left:1282px;top:459px;width:68px;height:21px;overflow:hidden"><div class="t" style="left:0;width:80px;text-align:right;top:4px;font-size:11px;line-height:14px;color:#333">70,00 %</div></div><div class="a" style="left:1017px;top:501px;width:333px;height:1px;background:#e6e6e6"></div><div class="t" style="left:1023px;top:484px;font-size:11px;line-height:14px;color:#333">%</div><div class="t" style="left:1100px;width:97px;text-align:right;top:484px;font-size:11px;line-height:14px;color:#333">92,86 %</div><div class="t" style="left:1182px;width:97px;text-align:right;top:484px;font-size:11px;line-height:14px;color:#333">85,71 %</div><div class="a" style="left:1282px;top:480px;width:68px;height:21px;overflow:hidden"><div class="t" style="left:0;width:80px;text-align:right;top:4px;font-size:11px;line-height:14px;color:#333">83,33 %</div></div><div class="a" style="left:1017px;top:522px;width:333px;height:1px;background:#e6e6e6"></div><div class="t" style="left:1023px;top:505px;font-size:11px;line-height:14px;color:#333">Variação</div><div class="t" style="left:1100px;width:97px;text-align:right;top:505px;font-size:11px;line-height:14px;color:#333">6,00 %</div><div class="t" style="left:1182px;width:97px;text-align:right;top:505px;font-size:11px;line-height:14px;color:#333">12,00 %</div><div class="a" style="left:1282px;top:501px;width:68px;height:21px;overflow:hidden"><div class="t" style="left:0;width:80px;text-align:right;top:4px;font-size:11px;line-height:14px;color:#333">14,00 %</div></div><div class="a" style="left:1017px;top:543px;width:333px;height:1px;background:#e6e6e6"></div><div class="t" style="left:1023px;top:526px;font-size:11px;line-height:14px;color:#333">Pontuação</div><div class="t" style="left:1100px;width:97px;text-align:right;top:526px;font-size:11px;line-height:14px;color:#333">95,00</div><div class="t" style="left:1182px;width:97px;text-align:right;top:526px;font-size:11px;line-height:14px;color:#333">95,00</div><div class="a" style="left:1282px;top:522px;width:68px;height:21px;overflow:hidden"><div class="t" style="left:0;width:80px;text-align:right;top:4px;font-size:11px;line-height:14px;color:#333">95,00</div></div><div class="a" style="left:1020px;top:557px;width:95px;height:6px;background:#b4b4b4;border-radius:3px"></div><div class="a" style="left:1016px;top:575px;width:334px;height:177px;border:1px solid #e3e3e3;border-bottom:none"></div><div class="a" style="left:1017px;top:576px;width:332px;height:30px;background:#f5f5f5"></div><svg class="a" style="left:1172px;top:566px" width="22" height="11"><path d="M3,10.5 L11,1.5 L19,10.5 Z" fill="#e9e9e9"/></svg><div class="t" style="left:1083px;width:200px;text-align:center;top:579px;font-size:20px;font-weight:bold;line-height:24px;color:#333">Mar/2016</div><div class="t" style="left:1135px;width:100px;text-align:center;top:611px;font-size:11px;line-height:14px;color:#888">100,00%</div><div class="t" style="left:1046px;top:714px;font-size:11px;line-height:14px;color:#888">70,00%</div><div class="t" style="left:1281px;top:714px;font-size:11px;line-height:14px;color:#888">130,00%</div><svg class="a" style="left:1016px;top:600px" width="340" height="170" viewBox="0 0 340 170"><path d="M84.80,119.50 A81.8,81.8 0 0 1 144.60,40.71" fill="none" stroke="#0000ff" stroke-width="10"/><path d="M146.26,40.27 A81.8,81.8 0 0 1 165.74,37.70" fill="none" stroke="#00ff00" stroke-width="10"/><path d="M167.46,37.70 A81.8,81.8 0 0 1 186.94,40.27" fill="none" stroke="#ffff00" stroke-width="10"/><path d="M188.60,40.71 A81.8,81.8 0 0 1 248.40,119.50" fill="none" stroke="#ff0000" stroke-width="10"/><path d="M166.60,119.50 L110.67,72.59" stroke="#0000ff" stroke-width="3.5"/><circle cx="166.60" cy="119.50" r="5" fill="#fff" stroke="#0000ff" stroke-width="2"/></svg><div class="t c" style="left:1083px;width:200px;text-align:center;top:729px;font-size:22px;letter-spacing:1px;line-height:26px;color:#0000e6">83,33%</div><div class="a" style="left:1016px;top:752px;width:336px;height:14px;background:#fff"></div><div class="a" style="left:1020px;top:756px;width:313px;height:6px;background:#b4b4b4;border-radius:3px"></div></body></html>
